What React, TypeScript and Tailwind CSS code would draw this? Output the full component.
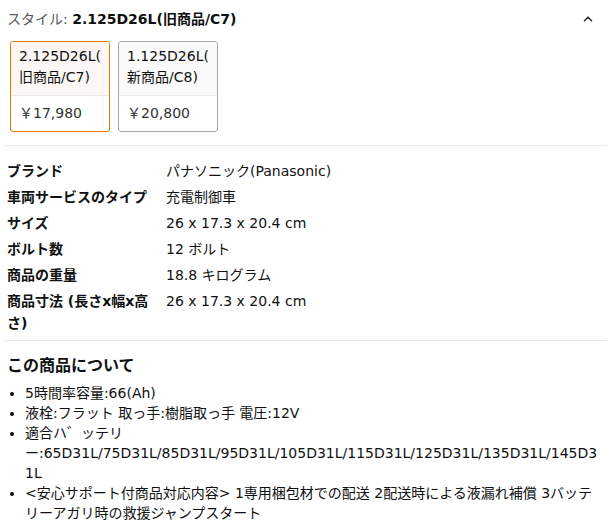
import React from 'react';
import { ChevronUp } from 'lucide-react';

const specs: [string, string][] = [
  ['ブランド', 'パナソニック(Panasonic)'],
  ['車両サービスのタイプ', '充電制御車'],
  ['サイズ', '26 x 17.3 x 20.4 cm'],
  ['ボルト数', '12 ボルト'],
  ['商品の重量', '18.8 キログラム'],
  ['商品寸法 (長さx幅x高さ)', '26 x 17.3 x 20.4 cm'],
];

const bullets = [
  '5時間率容量:66(Ah)',
  '液栓:フラット 取っ手:樹脂取っ手 電圧:12V',
  '適合ハ゛ッテリー:65D31L/75D31L/85D31L/95D31L/105D31L/115D31L/125D31L/135D31L/145D31L',
  '<安心サポート付商品対応内容> 1専用梱包材での配送 2配送時による液漏れ補償 3バッテリーアガリ時の救援ジャンプスタート',
];

const styles = [
  { name: ['2.125D26L(', '旧商品/C7)'], price: '￥17,980', selected: true },
  { name: ['1.125D26L(', '新商品/C8)'], price: '￥20,800', selected: false },
];

const App: React.FC = () => {
  return (
    <div className="w-[612px] bg-white pl-[4px] pr-[6px] text-[14px] text-[#0f1111] [font-family:'DejaVu_Sans','Noto_Sans_CJK_JP',sans-serif]">
      {/* Style selector */}
      <div className="flex items-center justify-between pl-[3px] pr-[11px] pt-[8px] leading-[22px]">
        <div>
          <span className="text-[#565959]">スタイル: </span>
          <span className="font-bold">2.125D26L(旧商品/C7)</span>
        </div>
        <ChevronUp className="w-[14px] h-[14px] text-[#333]" strokeWidth={3} />
      </div>

      <div className="flex gap-[8px] pl-[6px] pt-[11px]">
        {styles.map((s, i) => (
          <div
            key={i}
            className={`w-[100px] h-[91px] rounded-[3px] border flex flex-col overflow-hidden ${
              s.selected ? 'border-[#e77600]' : 'border-[#a6a6a6]'
            }`}
          >
            <div className={`h-[54px] px-[8px] pt-[4px] leading-[21px] border-b border-[#e7e7e7] ${s.selected ? 'bg-[#fcf7f4]' : 'bg-[#fafafa]'}`}>
              <div>{s.name[0]}</div>
              <div>{s.name[1]}</div>
            </div>
            <div className="flex-1 px-[8px] flex items-center text-[#333]">{s.price}</div>
          </div>
        ))}
      </div>

      <div className="mt-[13px] border-t border-[#e7e7e7]" />

      {/* Spec table */}
      <div className="pt-[12px] pb-[4px] pl-[3px]">
        {specs.map(([k, v], i) => (
          <div key={i} className="flex py-[2px] leading-[22px]">
            <div className="w-[159px] pr-[8px] font-bold">{k}</div>
            <div className="flex-1">{v}</div>
          </div>
        ))}
      </div>

      <div className="border-t border-[#e7e7e7]" />

      {/* About */}
      <div className="pl-[3px] pr-[4px] pt-[13px]">
        <h2 className="text-[16px] font-bold leading-[24px]">この商品について</h2>
        <ul className="mt-[5px] list-disc pl-[18px] leading-[20px] marker:text-[#0f1111]">
          {bullets.map((b, i) => (
            <li key={i} className="break-words">{b}</li>
          ))}
        </ul>
      </div>
    </div>
  );
};

export default App;
